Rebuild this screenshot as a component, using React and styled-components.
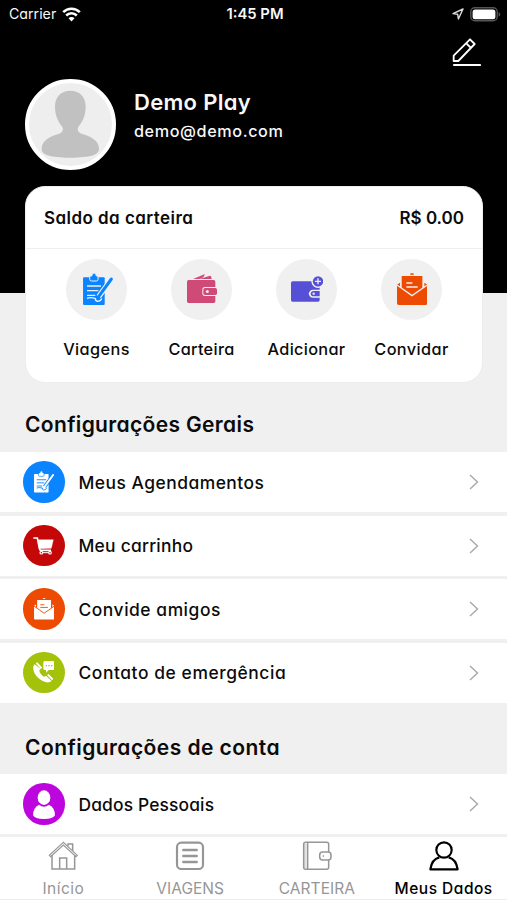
import styled, {createGlobalStyle} from "styled-components";

const GlobalStyle = createGlobalStyle`
    * {
        box-sizing: border-box;
    }
    body {
        margin: 0;
        background-color: #f0f0f0;
        font-family: Inter, "Open Sans", sans-serif;
        font-feature-settings: "cv11";
        color: #0b0b0b;
    }
`
const Screen = styled.div`
    display: flex;
    flex-direction: column;
    width: 507px;
    height: 900px;
    overflow: hidden;
`
const Content = styled.main`
    flex: 1;
    min-height: 0;
    overflow: hidden;
`
const Header = styled.header`
    height: 293px;
    background-color: black;
    color: #f8f8f8;
`
const StatusBar = styled.div`
    display: grid;
    grid-template-columns: 1fr auto 1fr;
    align-items: center;
    height: 28px;
    padding: 0 6px 0 9px;
    font-size: 14.2px;
    line-height: 18px;
`
const StatusSide = styled.div`
    display: flex;
    align-items: center;
    justify-content: ${(props) => props.$end ? "flex-end" : "flex-start"};
    gap: 6px;
`
const Text = styled.span`
    white-space: nowrap;
    letter-spacing: ${(props) => props.$spacing || 0}px;
`
const Clock = styled(Text)`
    font-size: 14.8px;
    font-weight: 600;
`
const EditRow = styled.div`
    display: flex;
    justify-content: flex-end;
    height: 51px;
    padding: 10px 26px 0 0;
`
const Profile = styled.div`
    display: flex;
    gap: 18px;
    padding-left: 25px;
`
const Avatar = styled.div`
    width: 91px;
    height: 91px;
    border-radius: 50%;
    border: 4px solid white;
    background-color: #eeeeee;
`
const ProfileText = styled.div`
    display: flex;
    flex-direction: column;
    padding-top: 9px;
`
const Name = styled(Text)`
    font-size: 22px;
    line-height: 29px;
    font-weight: 600;
`
const Email = styled(Text)`
    font-size: 16.2px;
    line-height: 29px;
    font-weight: 500;
`
const Card = styled.section`
    width: 458px;
    height: 197px;
    margin: -107px 0 0 25px;
    border-radius: 20px;
    border: 1px solid #ededed;
    background-color: white;
`
const Balance = styled.div`
    display: flex;
    align-items: center;
    justify-content: space-between;
    height: 62px;
    padding: 0 18px;
    border-bottom: 1px solid #eeeeee;
    font-size: 17px;
    line-height: 20px;
    font-weight: 600;
`
const Shortcuts = styled.div`
    display: grid;
    grid-template-columns: repeat(4, 105px);
    justify-content: center;
    padding-top: 10px;
`
const Shortcut = styled.div`
    display: flex;
    flex-direction: column;
    align-items: center;
    font-size: 16.3px;
    line-height: 24px;
    font-weight: 500;
`
const ShortcutIcon = styled.div`
    display: flex;
    align-items: center;
    justify-content: center;
    width: 61px;
    height: 61px;
    margin-bottom: 17px;
    padding: 0 0 2px ${(props) => props.$shift || 0}px;
    border-radius: 50%;
    background-color: #f0f0f0;
`
const SectionTitle = styled.h2`
    height: ${(props) => props.$height}px;
    margin: 0;
    padding: ${(props) => props.$top}px 0 0 25px;
    font-size: 21px;
    line-height: 30px;
    font-weight: 600;
`
const List = styled.div`
    display: flex;
    flex-direction: column;
    gap: 3.5px;
`
const Row = styled.div`
    display: flex;
    align-items: center;
    height: 60px;
    padding: 0 28px 0 23px;
    background-color: white;
    font-size: 17.4px;
    font-weight: 500;
`
const RowIcon = styled.div`
    display: flex;
    align-items: center;
    justify-content: center;
    width: 41.5px;
    height: 41.5px;
    margin-right: 14px;
    border-radius: 50%;
    background-color: ${(props) => props.$color};
`
const RowLabel = styled(Text)`
    flex: 1;
`
const TabBar = styled.nav`
    display: grid;
    grid-template-columns: repeat(4, 1fr);
    height: 66px;
    border-top: 3px solid #f0f0f0;
    border-bottom: 1px solid #ededed;
    background-color: white;
`
const Tab = styled.div`
    display: flex;
    flex-direction: column;
    align-items: center;
    gap: 8px;
    padding-top: 4px;
    font-size: 15.5px;
    line-height: 20px;
    font-weight: ${(props) => props.$active ? 500 : 400};
    color: ${(props) => props.$active ? "#000000" : "#969696"};
`

const WifiIcon = () => (
    <svg width="19" height="15" viewBox="0 0 19 15" fill="none" stroke="#fff" strokeWidth="2.6">
        <path d="M1.2 5.1a11.8 11.8 0 0 1 16.6 0M4.2 8.5a7.5 7.5 0 0 1 10.6 0" />
        <path d="M9.5 14.4 6.5 11.3a4.2 4.2 0 0 1 6 0Z" fill="#fff" stroke="none" />
    </svg>
)
const LocationIcon = () => (
    <svg width="12" height="12" viewBox="0 0 12 12" fill="none" stroke="#ddd" strokeWidth="1.4" strokeLinejoin="round">
        <path d="M11 1 1 5.6l4.7.7.7 4.7Z" />
    </svg>
)
const BatteryIcon = () => (
    <svg width="31" height="15" viewBox="0 0 31 15">
        <rect x=".8" y=".8" width="26.4" height="13" rx="4" fill="none" stroke="#555" strokeWidth="1.4" />
        <rect x="2.6" y="2.5" width="22.8" height="9.7" rx="2.5" fill="#fff" />
        <path d="M28.6 5.2c2.2.4 2.2 4 0 4.3Z" fill="#555" />
    </svg>
)
const PencilIcon = () => (
    <svg width="29" height="29" viewBox="0 0 87 87" fill="none" stroke="#fff" strokeWidth="5.5" strokeLinejoin="round">
        <path d="M5 69V53L54 4l14 14-49 51Z M43 16l14 14" />
        <path d="M6 81h78" strokeWidth="6.5" strokeLinecap="round" />
    </svg>
)
const AvatarIcon = () => (
    <svg width="83" height="83" viewBox="0 0 249 249" fill="#c1c1c1">
        <path d="M124 23c-29 0-46 19-46 48 0 28 11 46 20 58 8 11 3 20-12 25-34 10-48 25-48 44 0 17 24 26 86 26s86-9 86-26c0-19-14-34-48-44-15-5-20-14-12-25 9-12 20-30 20-58 0-29-17-48-46-48Z" />
    </svg>
)
const ClipboardIcon = ({color, cut, size = 32}) => (
    <svg width={size * 0.94} height={size} viewBox="0 0 90 96">
        <path d="M3 13h59q3 0 3 3v77q0 3-3 3H3q-3 0-3-3V16q0-3 3-3Z" fill={color} />
        <path d="M20 9h6q1-9 7-9t7 9h5v10q0 5-5 5H25q-5 0-5-5Z" fill={color} stroke={cut} strokeWidth="3" />
        <path d="M12 39h42M12 53h34M12 67h25" stroke={cut} strokeWidth="4" />
        <path d="m84 20-37 51" stroke={cut} strokeWidth="16" />
        <path d="M12 76q10-4 24 0M37 75q-1 8 6 10 11-1 13-9" fill="none" stroke={cut} strokeWidth="4" />
        <path d="m85 18-36 50" stroke={color} strokeWidth="9" strokeLinecap="round" />
        <path d="m43 67 9 7-9 6Z" fill={color} />
    </svg>
)
const WalletIcon = ({color, cut}) => (
    <svg width="30" height="29" viewBox="0 0 90 87">
        <path d="m18 15 36-15-5 10-13 5ZM37 15 69 5q4 0 5 10Z" fill={color} />
        <rect y="18" width="85" height="69" rx="5" fill={color} />
        <rect x="46" y="39" width="48" height="27" rx="8" fill={cut} />
        <rect x="49" y="42" width="41" height="21" rx="5" fill={color} />
        <circle cx="61" cy="52.5" r="4.5" fill={cut} />
    </svg>
)
const WalletAddIcon = ({color, cut}) => (
    <svg width="32" height="32" viewBox="0 0 96 96">
        <rect y="25" width="86" height="61" rx="5" fill={color} />
        <circle cx="81" cy="25" r="20" fill={cut} />
        <circle cx="81" cy="25" r="15.5" fill={color} />
        <path d="M81 16v18M72 25h18" stroke={cut} strokeWidth="4" />
        <path d="M87 50H66q-10 0-13 12 3 12 13 12h21" fill={cut} />
        <path d="M86 54H68q-8 0-9 8 1 8 9 8h18Z" fill={color} />
        <circle cx="68" cy="62" r="3.5" fill={cut} />
    </svg>
)
const InviteIcon = ({color, cut, size = 32}) => (
    <svg width={size * 0.95} height={size} viewBox="0 0 91 96">
        <path d="M39 5q0-5 6-5t6 5Z" fill={color} />
        <path d="M14 9h62v42L45 72 14 51Z" fill={color} />
        <path d="M9 29v13L0 35ZM82 29v13l9-7Z" fill={color} />
        <path d="M0 36 45 68 91 36v55q0 5-5 5H5q-5 0-5-5Z" fill={color} />
        <path d="m0 36 45 32 46-32" fill="none" stroke={cut} strokeWidth="4" />
        <path d="M28 30h18M28 42h34" stroke={cut} strokeWidth="4" />
    </svg>
)
const CartIcon = () => (
    <svg width="21" height="18" viewBox="0 0 63 54" fill="none" stroke="#fff">
        <path d="M1 3h12l6 31q1 6 6 6h29" strokeWidth="5" />
        <path d="M14 8h47l-6 26-36 1Z" fill="#fff" strokeWidth="1" />
        <circle cx="25" cy="47" r="4" fill="#c40808" strokeWidth="3.5" />
        <circle cx="51" cy="47" r="4" fill="#c40808" strokeWidth="3.5" />
        <path d="M29 47h18" strokeWidth="3" />
    </svg>
)
const PhoneIcon = () => (
    <svg width="21" height="23" viewBox="0 0 63 69" fill="#fff">
        <path d="M5 10C-4 19 2 39 17 52c15 14 31 15 39 8L39 44q-6 5-10 1-9-8-10-15 0-5 4-6Z" />
        <path d="m8 7 5-3 15 16-5 4ZM42 42l5-3 14 14-4 5Z" />
        <path d="M35 0h24q5 0 5 5v17q0 5-5 5H47l-8 8v-8h-4q-4 0-4-5V5q0-5 4-5Z" />
        <path d="M38 14h4M46 14h4M54 14h4" stroke="#a5c20b" strokeWidth="4" />
    </svg>
)
const PersonIcon = () => (
    <svg width="22" height="29" viewBox="0 0 66 87" fill="#fff">
        <ellipse cx="33" cy="23" rx="19" ry="22" />
        <path d="M18 44q15 12 30 0 18 9 18 32-5 11-33 11T0 76q0-23 18-32Z" />
    </svg>
)
const ChevronIcon = () => (
    <svg width="10" height="16" viewBox="0 0 10 16" fill="none" stroke="#a8a8a8" strokeWidth="1.4">
        <path d="m1 1 7.5 7L1 15" />
    </svg>
)
const HomeIcon = () => (
    <svg width="30" height="30" viewBox="0 0 90 90" fill="none" stroke="currentColor" strokeWidth="4.5">
        <path d="M12 42v42h68V42M35 84V51h21v33" />
        <path d="M46 4 4 43l4 4 38-35 38 35 4-4Z" strokeWidth="3.5" />
        <path d="M60 15V9h14v21" />
    </svg>
)
const TripsIcon = () => (
    <svg width="30" height="30" viewBox="0 0 90 90" fill="none" stroke="currentColor" strokeWidth="6.5">
        <rect x="6" y="5" width="78" height="79" rx="13" />
        <path d="M25 27h40M25 45h40M25 63h40" strokeWidth="7.5" strokeLinecap="round" />
    </svg>
)
const BookIcon = () => (
    <svg width="30" height="30" viewBox="0 0 90 90" fill="none" stroke="currentColor" strokeWidth="4.5">
        <path d="M10 8v74" stroke="#e2e2e2" strokeWidth="8" />
        <path d="M80 33V10q0-6-6-6H11q-6 0-6 6v69q0 6 6 6h63q6 0 6-6V57M17 4v81" />
        <rect x="53" y="33" width="34" height="24" rx="9" />
        <circle cx="64" cy="45" r="1.5" fill="currentColor" strokeWidth="2" />
    </svg>
)
const AccountIcon = () => (
    <svg width="30" height="30" viewBox="0 0 90 90" fill="none" stroke="currentColor" strokeWidth="6.5" strokeLinejoin="round">
        <circle cx="45" cy="27" r="23" />
        <path d="M31 49Q8 55 4 85h82Q82 55 59 49" />
    </svg>
)

const shortcuts = [
    {label: "Viagens", icon: <ClipboardIcon color="#0a84ff" cut="#f0f0f0" />, shift: 4, spacing: 0.4},
    {label: "Carteira", icon: <WalletIcon color="#d04a78" cut="#f0f0f0" />, shift: 1, spacing: 0.3},
    {label: "Adicionar", icon: <WalletAddIcon color="#5650d6" cut="#f0f0f0" />, spacing: 0.3},
    {label: "Convidar", icon: <InviteIcon color="#ee4b02" cut="#f0f0f0" />, shift: 1, spacing: 0.4},
]
const general = [
    {label: "Meus Agendamentos", color: "#0a84ff", icon: <ClipboardIcon color="#fff" cut="#0a84ff" size={21.5} />, spacing: 0.5},
    {label: "Meu carrinho", color: "#c40808", icon: <CartIcon />, spacing: 0.25},
    {label: "Convide amigos", color: "#ee4b02", icon: <InviteIcon color="#fff" cut="#ee4b02" size={21.5} />, spacing: 0.55},
    {label: "Contato de emergência", color: "#a5c20b", icon: <PhoneIcon />, spacing: 0.58},
]
const account = [
    {label: "Dados Pessoais", color: "#bd05dd", icon: <PersonIcon />, spacing: 0.15},
]
const tabs = [
    {label: "Início", icon: <HomeIcon />, spacing: 0.5},
    {label: "VIAGENS", icon: <TripsIcon />, spacing: 0},
    {label: "CARTEIRA", icon: <BookIcon />, spacing: 0.05},
    {label: "Meus Dados", icon: <AccountIcon />, active: true, spacing: 0.5},
]

const Rows = ({items}) => (
    <List>
        {items.map((item) => {
            return <Row key={item.label}>
                <RowIcon $color={item.color}>{item.icon}</RowIcon>
                <RowLabel $spacing={item.spacing}>{item.label}</RowLabel>
                <ChevronIcon />
            </Row>
        })}
    </List>
)

export default function App() {
    return(
        <>
            <GlobalStyle />
            <Screen>
                <Content>
                    <Header>
                        <StatusBar>
                            <StatusSide><Text>Carrier</Text><WifiIcon /></StatusSide>
                            <Clock>1:45 PM</Clock>
                            <StatusSide $end><LocationIcon /><BatteryIcon /></StatusSide>
                        </StatusBar>
                        <EditRow><PencilIcon /></EditRow>
                        <Profile>
                            <Avatar><AvatarIcon /></Avatar>
                            <ProfileText>
                                <Name $spacing={0.3}>Demo Play</Name>
                                <Email $spacing={0.6}>demo@demo.com</Email>
                            </ProfileText>
                        </Profile>
                    </Header>
                    <Card>
                        <Balance>
                            <Text $spacing={0.45}>Saldo da carteira</Text>
                            <Text>R$ 0.00</Text>
                        </Balance>
                        <Shortcuts>
                            {shortcuts.map((item) => {
                                return <Shortcut key={item.label}>
                                    <ShortcutIcon $shift={item.shift}>{item.icon}</ShortcutIcon>
                                    <Text $spacing={item.spacing}>{item.label}</Text>
                                </Shortcut>
                            })}
                        </Shortcuts>
                    </Card>
                    <SectionTitle $height={69} $top={27}><Text $spacing={0.35}>Configurações Gerais</Text></SectionTitle>
                    <Rows items={general} />
                    <SectionTitle $height={71.5} $top={30}><Text $spacing={0.45}>Configurações de conta</Text></SectionTitle>
                    <Rows items={account} />
                </Content>
                <TabBar>
                    {tabs.map((item) => {
                        return <Tab key={item.label} $active={item.active}>
                            {item.icon}
                            <Text $spacing={item.spacing}>{item.label}</Text>
                        </Tab>
                    })}
                </TabBar>
            </Screen>
        </>
    )
}
